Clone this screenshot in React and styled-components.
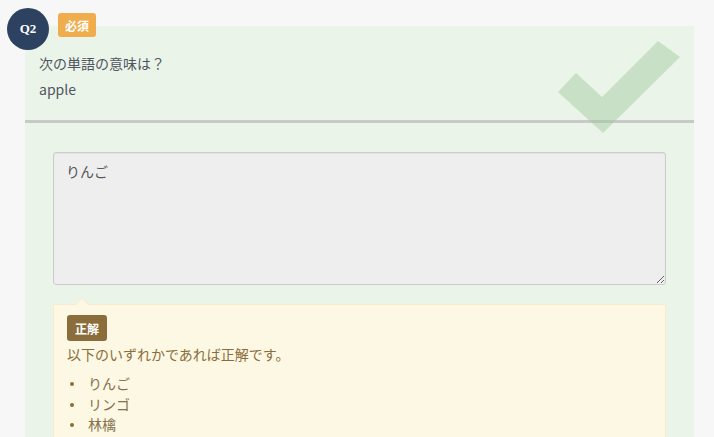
import React from "react";
import styled, { createGlobalStyle } from "styled-components";

const Global = createGlobalStyle`
  html, body { margin: 0; padding: 0; background: #f7f7f7; }
  body { font-family: "Noto Sans CJK JP", "Noto Sans", sans-serif; }
`;

const Page = styled.div`
  width: 714px;
  height: 437px;
  overflow: hidden;
  background: #f7f7f7;
`;

const Question = styled.section`
  position: relative;
  padding: 26px 20px 0 25px;
`;

const NumberBadge = styled.div`
  position: absolute;
  left: 7px;
  top: 8px;
  width: 42px;
  height: 42px;
  border-radius: 50%;
  background: #2d4260;
  color: #fff;
  display: flex;
  align-items: center;
  justify-content: center;
  font-family: "Liberation Serif", "DejaVu Serif", serif;
  font-weight: bold;
  font-size: 13px;
  z-index: 2;
`;

const Required = styled.span`
  position: absolute;
  left: 58px;
  top: 13px;
  width: 38px;
  height: 24px;
  border-radius: 3px;
  background: #f0ad4e;
  color: #fff;
  font-weight: bold;
  font-size: 12px;
  display: flex;
  align-items: center;
  justify-content: center;
  z-index: 2;
`;

const Card = styled.div`
  position: relative;
  background: #eaf4e8;
`;

const Header = styled.header`
  height: 97px;
  box-sizing: border-box;
  padding: 24px 14px 0 14px;
  border-bottom: 3px solid #c9c9c9;
  color: #4f5560;
  font-size: 14px;
`;

const Line = styled.div`
  line-height: 26px;
`;

const Check = styled.svg`
  position: absolute;
  left: 533px;
  top: 15px;
  width: 160px;
  height: 130px;
  pointer-events: none;
`;

const Body = styled.div`
  padding: 29px 28px 0 28px;
  height: 314px;
  box-sizing: border-box;
`;

const TextArea = styled.textarea`
  display: block;
  width: 100%;
  height: 133px;
  box-sizing: border-box;
  background: #eeeeee;
  border: 1px solid #cccccc;
  border-radius: 3px;
  padding: 8px 12px;
  font-family: "Noto Sans CJK JP", "Noto Sans", sans-serif;
  font-size: 14px;
  color: #555;
  resize: vertical;
  outline: none;
  box-shadow: inset 0 1px 1px rgba(0,0,0,0.05);
`;

const Answer = styled.div`
  position: relative;
  margin-top: 19px;
  background: #fcf8e3;
  border: 1px solid #faebcc;
  border-bottom: none;
  padding: 10px 13px 0 13px;
  color: #8a6d3b;
  font-size: 14px;
  height: 140px;
  box-sizing: border-box;

  &::before {
    content: "";
    position: absolute;
    left: 21px;
    top: -7px;
    border-left: 7px solid transparent;
    border-right: 7px solid transparent;
    border-bottom: 7px solid #faebcc;
  }
  &::after {
    content: "";
    position: absolute;
    left: 22px;
    top: -6px;
    border-left: 6px solid transparent;
    border-right: 6px solid transparent;
    border-bottom: 6px solid #fcf8e3;
  }
`;

const CorrectLabel = styled.span`
  display: inline-flex;
  align-items: center;
  justify-content: center;
  width: 40px;
  height: 26px;
  border-radius: 3px;
  background: #8a6d3b;
  color: #fff;
  font-weight: bold;
  font-size: 12px;
`;

const Note = styled.p`
  margin: 1px 0 0 0;
  line-height: 24px;
`;

const List = styled.ul`
  margin: 7px 0 0 0;
  padding: 0;
  list-style: none;
`;

const Item = styled.li`
  position: relative;
  line-height: 20.5px;
  padding-left: 21px;
  color: #86704c;

  &::before {
    content: "";
    position: absolute;
    left: 3px;
    top: 9px;
    width: 4px;
    height: 4px;
    border-radius: 50%;
    background: #8a6d3b;
  }
`;

export default function App() {
  return (
    <Page>
      <Global />
      <Question>
        <NumberBadge>Q2</NumberBadge>
        <Required>必須</Required>
        <Card>
          <Header>
            <Line>次の単語の意味は？</Line>
            <Line>apple</Line>
          </Header>
          <Check viewBox="533 15 160 130">
            <polygon
              points="533,66 551,47 577,71 633,15 655,31 578,107"
              fill="rgba(160,200,155,0.45)"
            />
          </Check>
          <Body>
            <TextArea defaultValue="りんご" />
            <Answer>
              <CorrectLabel>正解</CorrectLabel>
              <Note>以下のいずれかであれば正解です。</Note>
              <List>
                <Item>りんご</Item>
                <Item>リンゴ</Item>
                <Item>林檎</Item>
              </List>
            </Answer>
          </Body>
        </Card>
      </Question>
    </Page>
  );
}
